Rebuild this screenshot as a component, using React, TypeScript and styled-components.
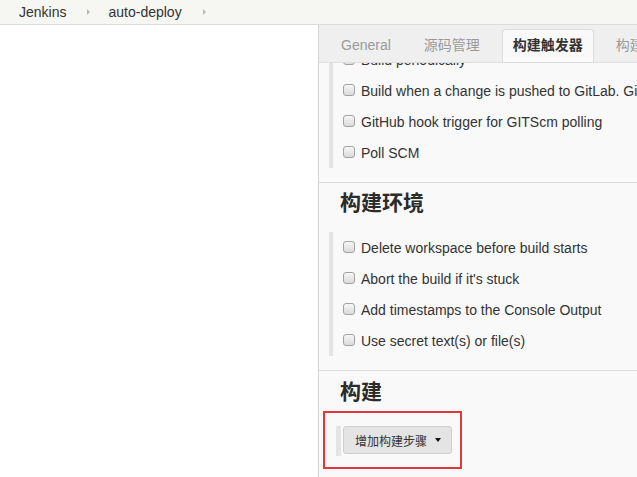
import React from 'react';
import styled, { createGlobalStyle } from 'styled-components';

const GlobalStyle = createGlobalStyle`
  html, body {
    margin: 0;
    padding: 0;
    background: #ffffff;
  }
  body {
    font-family: "Liberation Sans", Arial, "Noto Sans CJK SC", sans-serif;
    color: #333333;
  }
`;

const Page = styled.div`
  width: 637px;
  height: 477px;
  display: flex;
  flex-direction: column;
  overflow: hidden;
`;

const Breadcrumb = styled.div`
  height: 24px;
  flex-shrink: 0;
  display: flex;
  align-items: center;
  padding-left: 19px;
  background: #f6f6f2;
  border-bottom: 1px solid #dcdcd8;
  font-size: 14px;
  color: #333333;
`;

const Crumb = styled.span`
  line-height: 24px;
`;

const CrumbArrow = styled.span`
  width: 0;
  height: 0;
  margin: 0 18px 0 21px;
  border-top: 3px solid transparent;
  border-bottom: 3px solid transparent;
  border-left: 3px solid #b8b8b8;
`;

const Body = styled.div`
  flex: 1;
  display: flex;
  min-height: 0;
`;

const SidePane = styled.div`
  width: 318px;
  flex-shrink: 0;
  background: #ffffff;
  border-right: 1px solid #d4d4d4;
`;

const Main = styled.div`
  flex: 1;
  min-width: 0;
  display: flex;
  flex-direction: column;
  background: #f9f9f9;
`;

const TabBar = styled.div`
  height: 37px;
  flex-shrink: 0;
  display: flex;
  align-items: flex-end;
  padding-left: 11px;
  background: #efefef;
  border-bottom: 1px solid #dddddd;
  white-space: nowrap;
  overflow: hidden;
  position: relative;
  z-index: 1;
`;

const Tab = styled.div<{ $active?: boolean }>`
  height: 34px;
  box-sizing: border-box;
  padding: 7px 10px 0;
  margin-right: 11px;
  margin-bottom: -1px;
  font-size: 14px;
  line-height: 16px;
  font-family: "Liberation Sans", Arial, "Noto Sans CJK SC", sans-serif;
  color: ${({ $active }) => ($active ? '#333333' : '#9a9a9a')};
  font-weight: ${({ $active }) => ($active ? 700 : 400)};
  background: ${({ $active }) => ($active ? '#f9f9f9' : 'transparent')};
  border: 1px solid ${({ $active }) => ($active ? '#dddddd' : 'transparent')};
  border-bottom: none;
  border-radius: 4px 4px 0 0;
`;

const Scroller = styled.div`
  flex: 1;
  overflow: hidden;
`;

const Content = styled.div`
  margin-top: -19px;
`;

const OptionGroup = styled.div`
  margin-left: 10px;
  padding-left: 10px;
  border-left: 4px solid #e4e4e4;
`;

const OptionRow = styled.label`
  height: 31px;
  display: flex;
  align-items: center;
  gap: 6px;
  font-size: 14px;
  color: #333333;
  white-space: nowrap;
`;

const CheckBox = styled.span`
  width: 12px;
  height: 12px;
  box-sizing: border-box;
  flex-shrink: 0;
  border: 1px solid #a3a3a3;
  border-radius: 3px;
  background: linear-gradient(#f7f7f7, #dadada);
  margin-top: -2px;
`;

const Section = styled.div`
  margin-top: 14px;
  border-top: 1px solid #dddddd;
`;

const SectionTitle = styled.h2`
  margin: 4px 0 17px 21px;
  font-size: 21px;
  line-height: 28px;
  font-weight: 700;
  color: #2b2b2b;
  font-family: "Noto Sans CJK SC", sans-serif;
`;

const BuildTitle = styled(SectionTitle)`
  margin-top: 5px;
  margin-bottom: 7px;
`;

const Highlight = styled.div`
  display: inline-flex;
  align-items: flex-start;
  margin-left: 4px;
  padding: 13px 8px 11px 11px;
  border: 2.5px solid #e2383d;
`;

const StepBar = styled.div`
  width: 5px;
  height: 30px;
  margin-right: 2px;
  background: #e4e4e4;
`;

const AddStepButton = styled.div`
  height: 28px;
  box-sizing: border-box;
  display: flex;
  align-items: center;
  gap: 8px;
  padding: 0 10px 0 11px;
  background: #e4e4e4;
  border: 1px solid #cfcfcf;
  border-radius: 3px;
  font-size: 12px;
  color: #333333;
  font-family: "Noto Sans CJK SC", sans-serif;
`;

const Caret = styled.span`
  width: 0;
  height: 0;
  border-left: 3.5px solid transparent;
  border-right: 3.5px solid transparent;
  border-top: 4px solid #111111;
`;

const triggerOptions = [
  'Build periodically',
  'Build when a change is pushed to GitLab. GitLab webhook URL',
  'GitHub hook trigger for GITScm polling',
  'Poll SCM',
];

const envOptions = [
  'Delete workspace before build starts',
  "Abort the build if it's stuck",
  'Add timestamps to the Console Output',
  'Use secret text(s) or file(s)',
];

const tabs = ['General', '源码管理', '构建触发器', '构建环境'];

const App: React.FC = () => {
  return (
    <Page>
      <GlobalStyle />
      <Breadcrumb>
        <Crumb>Jenkins</Crumb>
        <CrumbArrow />
        <Crumb>auto-deploy</Crumb>
        <CrumbArrow />
      </Breadcrumb>
      <Body>
        <SidePane />
        <Main>
          <TabBar>
            {tabs.map((t) => (
              <Tab key={t} $active={t === '构建触发器'}>
                {t}
              </Tab>
            ))}
          </TabBar>
          <Scroller>
            <Content>
              <OptionGroup>
                {triggerOptions.map((o) => (
                  <OptionRow key={o}>
                    <CheckBox />
                    {o}
                  </OptionRow>
                ))}
              </OptionGroup>
              <Section>
                <SectionTitle>构建环境</SectionTitle>
                <OptionGroup>
                  {envOptions.map((o) => (
                    <OptionRow key={o}>
                      <CheckBox />
                      {o}
                    </OptionRow>
                  ))}
                </OptionGroup>
              </Section>
              <Section>
                <BuildTitle>构建</BuildTitle>
                <Highlight>
                  <StepBar />
                  <AddStepButton>
                    增加构建步骤
                    <Caret />
                  </AddStepButton>
                </Highlight>
              </Section>
            </Content>
          </Scroller>
        </Main>
      </Body>
    </Page>
  );
};

export default App;
